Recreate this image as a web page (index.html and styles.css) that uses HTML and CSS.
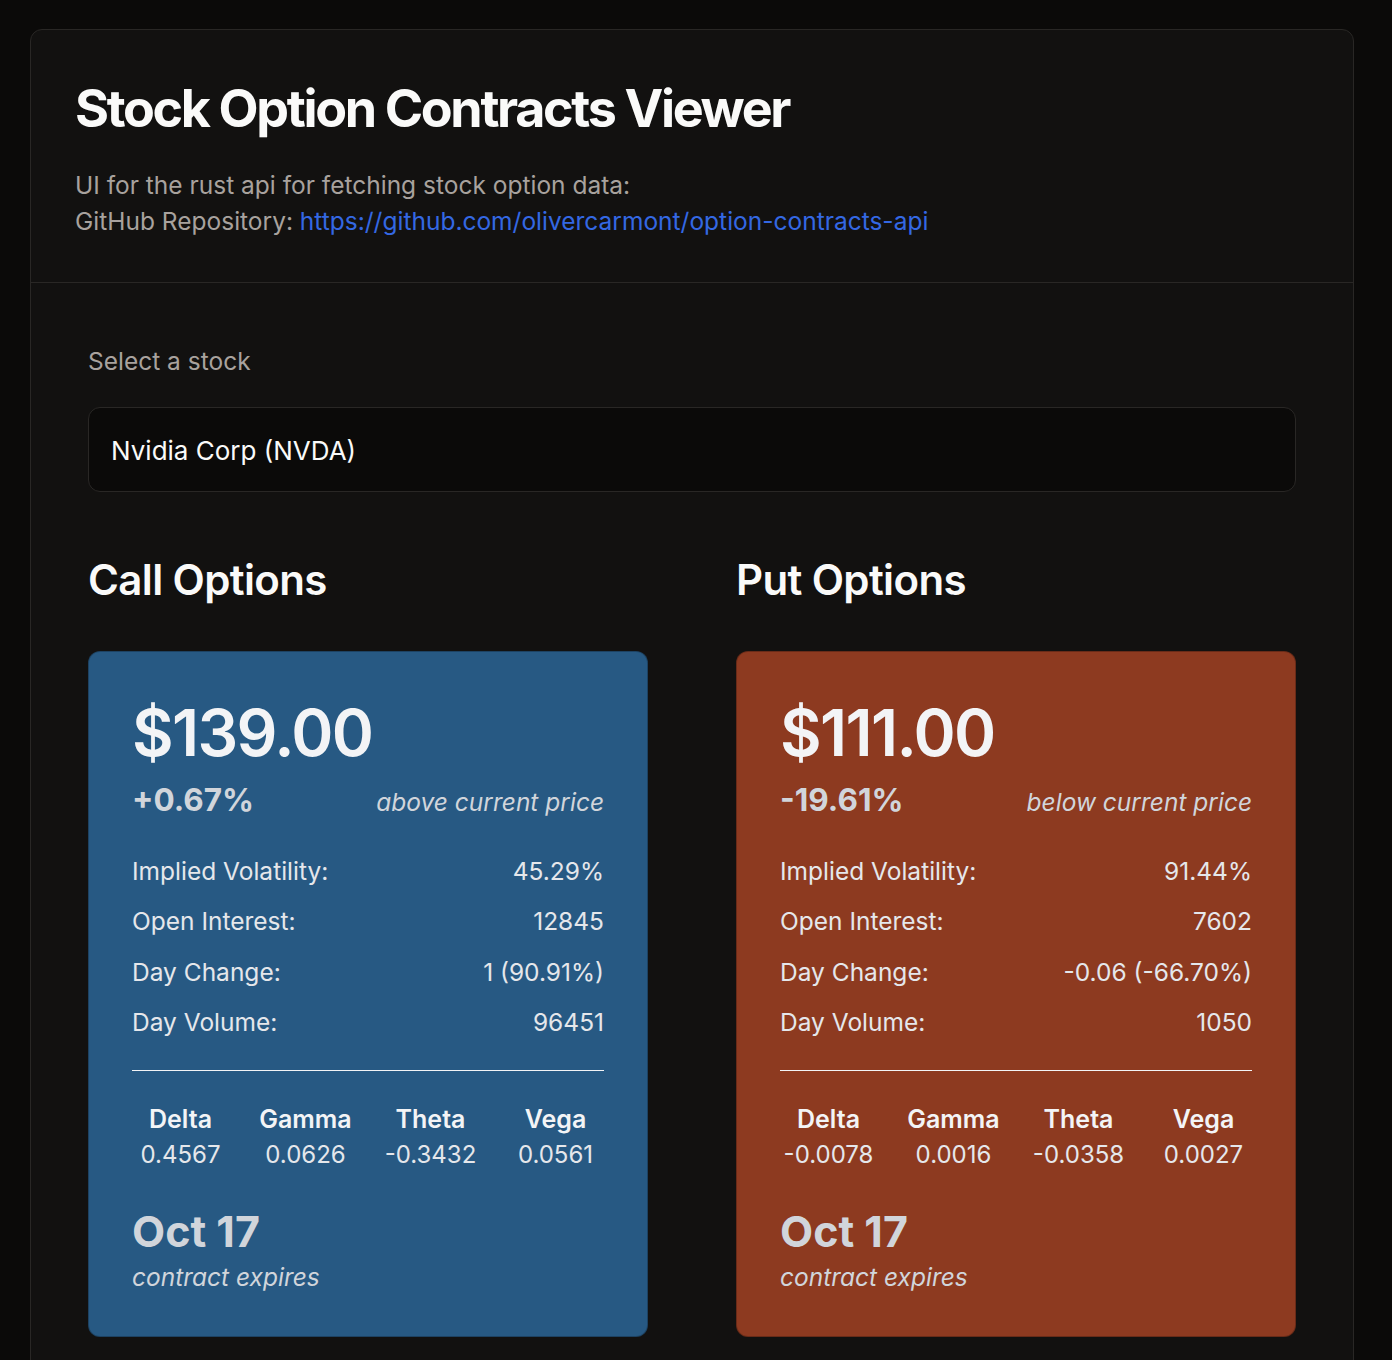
FILE: index.html
```html
<!DOCTYPE html>
<html lang="en">
<head>
<meta charset="utf-8">
<title>Stock Option Contracts Viewer</title>
<link rel="stylesheet" href="styles.css">
</head>
<body>
<div class="page">
  <main class="panel">
    <header class="panel-header">
      <h1 class="title">Stock Option Contracts Viewer</h1>
      <p class="subtitle">UI for the rust api for fetching stock option data:<br>GitHub Repository: <a class="repo-link" href="#">https://github.com/olivercarmont/option-contracts-api</a></p>
    </header>
    <section class="panel-body">
      <label class="field-label">Select a stock</label>
      <div class="select-box">Nvidia Corp (NVDA)</div>
      <div class="columns">
        <div class="column">
          <h2 class="column-title">Call Options</h2>
          <div class="card card-call">
            <div class="price">$139.00</div>
            <div class="change-row">
              <span class="change">+0.67%</span>
              <span class="change-note">above current price</span>
            </div>
            <div class="stats">
              <div class="stat"><span>Implied Volatility:</span><span>45.29%</span></div>
              <div class="stat"><span>Open Interest:</span><span>12845</span></div>
              <div class="stat"><span>Day Change:</span><span>1 (90.91%)</span></div>
              <div class="stat"><span>Day Volume:</span><span>96451</span></div>
            </div>
            <div class="greeks">
              <div class="greek"><span class="greek-name">Delta</span><span class="greek-val">0.4567</span></div>
              <div class="greek"><span class="greek-name">Gamma</span><span class="greek-val">0.0626</span></div>
              <div class="greek"><span class="greek-name">Theta</span><span class="greek-val">-0.3432</span></div>
              <div class="greek"><span class="greek-name">Vega</span><span class="greek-val">0.0561</span></div>
            </div>
            <div class="expiry">Oct 17</div>
            <div class="expiry-note">contract expires</div>
          </div>
        </div>
        <div class="column">
          <h2 class="column-title">Put Options</h2>
          <div class="card card-put">
            <div class="price">$111.00</div>
            <div class="change-row">
              <span class="change">-19.61%</span>
              <span class="change-note">below current price</span>
            </div>
            <div class="stats">
              <div class="stat"><span>Implied Volatility:</span><span>91.44%</span></div>
              <div class="stat"><span>Open Interest:</span><span>7602</span></div>
              <div class="stat"><span>Day Change:</span><span>-0.06 (-66.70%)</span></div>
              <div class="stat"><span>Day Volume:</span><span>1050</span></div>
            </div>
            <div class="greeks">
              <div class="greek"><span class="greek-name">Delta</span><span class="greek-val">-0.0078</span></div>
              <div class="greek"><span class="greek-name">Gamma</span><span class="greek-val">0.0016</span></div>
              <div class="greek"><span class="greek-name">Theta</span><span class="greek-val">-0.0358</span></div>
              <div class="greek"><span class="greek-name">Vega</span><span class="greek-val">0.0027</span></div>
            </div>
            <div class="expiry">Oct 17</div>
            <div class="expiry-note">contract expires</div>
          </div>
        </div>
      </div>
    </section>
  </main>
</div>
</body>
</html>
```
FILE: styles.css
```css
* { box-sizing: border-box; }
html, body { margin: 0; padding: 0; }
body {
  background: #0b0a09;
  font-family: Inter, "Noto Sans", "Liberation Sans", sans-serif;
  color: #fafaf9;
  overflow: hidden;
}
.page {
  padding: 29px 38px 0 30px;
}
.panel {
  background: #121110;
  border: 1px solid #292725;
  border-radius: 12px;
}
.panel-header {
  padding: 50px 44px 43px;
  border-bottom: 1px solid #292725;
}
.title {
  margin: 0;
  font-size: 52px;
  line-height: 58px;
  font-weight: 700;
  letter-spacing: -0.045em;
  color: #fafaf9;
}
.subtitle {
  margin: 29px 0 0;
  font-size: 24.5px;
  line-height: 36px;
  color: #a8a29e;
}
.repo-link {
  color: #3468e3;
  text-decoration: none;
}
.panel-body {
  padding: 60px 57px 80px;
}
.field-label {
  display: block;
  font-size: 24.5px;
  line-height: 36px;
  color: #a8a29e;
}
.select-box {
  margin-top: 28px;
  height: 85px;
  display: flex;
  align-items: center;
  padding: 1px 22px 0;
  background: #0b0a09;
  border: 1px solid #292725;
  border-radius: 12px;
  font-size: 26px;
  color: #fafaf9;
}
.columns {
  margin-top: 60px;
  display: grid;
  grid-template-columns: 1fr 1fr;
  gap: 88px;
}
.column-title {
  margin: 0;
  font-size: 42px;
  line-height: 56px;
  font-weight: 600;
  letter-spacing: -0.015em;
  color: #fafaf9;
}
.card {
  margin-top: 43px;
  border-radius: 12px;
  padding: 43px 43px 43px;
  border: 1px solid rgba(0,0,0,0.25);
}
.card-call { background: #275983; }
.card-put { background: #8d3a20; }
.price {
  font-size: 64px;
  line-height: 76px;
  font-weight: 600;
  letter-spacing: -0.025em;
  color: #f3f4f6;
}
.change-row {
  display: flex;
  justify-content: space-between;
  align-items: baseline;
  margin-top: 9px;
}
.change {
  font-size: 31.5px;
  line-height: 40px;
  font-weight: 700;
  color: #d1d5db;
}
.change-note {
  font-size: 24.5px;
  font-style: italic;
  color: #d1d5db;
}
.stats {
  margin-top: 33px;
  display: flex;
  flex-direction: column;
  gap: 14px;
  padding-bottom: 30px;
  border-bottom: 1px solid #f3f4f6;
}
.stat {
  display: flex;
  justify-content: space-between;
  font-size: 24.5px;
  line-height: 36.3px;
  color: #e5e7eb;
}
.greeks {
  margin-top: 30px;
  display: grid;
  grid-template-columns: repeat(4, 1fr);
  gap: 28px;
  text-align: center;
}
.greek {
  display: flex;
  flex-direction: column;
}
.greek-name {
  font-size: 25px;
  line-height: 36px;
  font-weight: 600;
  color: #f3f4f6;
}
.greek-val {
  font-size: 24px;
  line-height: 36px;
  color: #e5e7eb;
}
.expiry {
  margin-top: 34px;
  font-size: 43px;
  line-height: 48px;
  font-weight: 700;
  color: #d1d5db;
}
.expiry-note {
  margin-top: 6px;
  font-size: 24.5px;
  line-height: 32px;
  font-style: italic;
  color: #d1d5db;
}
```
